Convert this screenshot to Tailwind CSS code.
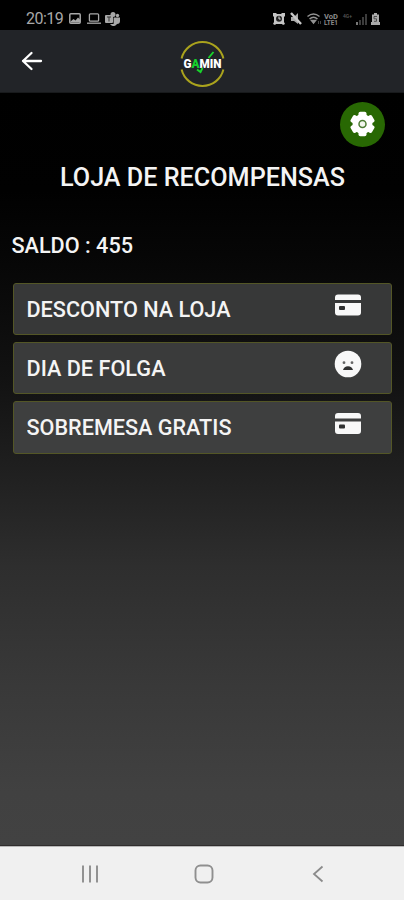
<!DOCTYPE html>
<html lang="pt">
<head>
<meta charset="utf-8">
<title>Loja de Recompensas</title>
<script src="https://cdn.jsdelivr.net/npm/@tailwindcss/browser@4"></script>
</head>
<body class="bg-black">
<div class="w-[404px] h-[900px] flex flex-col overflow-hidden font-['Roboto',sans-serif] font-medium text-[#f4f4f4]">
  <header class="h-[30px] bg-black flex items-center justify-between pl-[26px] pr-[23px] pt-[8px] text-[#a8a8a8]">
    <div class="flex items-center gap-[6px]">
      <span class="font-normal text-[16px] leading-[20px] w-[37px] tracking-[-0.5px] whitespace-nowrap">20:19</span>
      <svg class="w-[12px] h-[11px] -mt-px" viewBox="0 0 12 11" fill="none" stroke="currentColor" stroke-width="1.5"><rect x=".8" y=".8" width="10.4" height="9.4" rx="1"/><path d="M1.500 8.500 4.500 6l2 1.500L9 4.500l2 2V9.500H1.500z" fill="currentColor" stroke="none"/></svg>
      <svg class="w-[14px] h-[11px] -mt-px" viewBox="0 0 14 11" fill="none" stroke="currentColor" stroke-width="1.300"><rect x="2.400" y=".8" width="9.200" height="7.400" rx="1"/><path d="M0 10.200h14"/></svg>
      <svg class="w-[15px] h-[14px] -ml-[2px] -mt-px" viewBox="0 0 15 14" fill="currentColor"><rect y="3" width="8" height="8" rx="1"/><circle cx="8" cy="2.500" r="2.500"/><circle cx="12.500" cy="3.500" r="1.700"/><path d="M8.600 5.600H15V9a3 3 0 0 1-3 3 4 4 0 0 1-7 0h3.600z"/><path d="M2 5h4M4 5v4.500" stroke="#333" fill="none"/></svg>
    </div>
    <svg class="w-[108px] h-[14px] -mt-px" viewBox="0 0 108 14" fill="currentColor">
      <path d="M0 1h3l1 1h4l1-1h3v3l-1 1v5l1 2-2 1-1-1H3l-1 1-2-1 1-2V5L0 4z" fill="#c4c4c4"/><circle cx="6" cy="6.700" r="3" fill="#222"/><path d="M6 4.500V7h1.700" fill="none" stroke="#ddd"/>
      <path d="M18 5h3l4-4v11l-4-3h-3z" fill="#aaa"/><path d="m18 1 10 11" stroke="#c8c8c8" stroke-width="2.400"/>
      <g fill="none" stroke="#929292" stroke-width="1.500"><path d="M34.500 4.500q6-5 12 0M36.500 7q4-3.500 8 0"/><path d="m38.500 8.500 2 2.500 2-2.500z" fill="#929292"/></g><path d="M45.500 9v3m2-3v3" stroke="#444"/>
      <text x="51" y="7" font-size="7" font-weight="700" textLength="14" lengthAdjust="spacingAndGlyphs" fill="#8c8c8c">VoD</text><text x="51" y="13.300" font-size="7" font-weight="700" textLength="14" lengthAdjust="spacingAndGlyphs" fill="#8c8c8c">LTE1</text>
      <text x="70" y="5.500" font-size="5" textLength="9" lengthAdjust="spacingAndGlyphs" fill="#5a5a5a">4G+</text>
      <path d="M83 10h2v3h-2z" fill="#777"/><path d="M86 8h2v5h-2zM89 5h2v8h-2zM92 2h2v11h-2z" fill="#3c3c3c"/>
      <path d="M101 1h3v1.500h2V10h1v3h-9v-3h1V2.500h2z" fill="#aaa"/><path d="M104 4.500h-3v2.300h2.500v2.500H101" fill="none" stroke="#444" stroke-width=".9"/>
    </svg>
  </header>
  <nav class="h-[63px] bg-[#222428] border-b border-[#181a1c] grid grid-cols-[1fr_46px_1fr] items-center pl-[20px] pr-[20px]">
    <svg class="w-[22px] h-[20px] ml-px" viewBox="0 0 22 20" fill="none" stroke="#fff" stroke-width="2.300" stroke-linecap="round" stroke-linejoin="round"><path d="M10.500 2 2 10l8.500 8M2 10h18"/></svg>
    <svg class="w-[46px] h-[46px] mt-[5px]" viewBox="0 0 46 46" fill="none">
      <path d="M2.600 17.500a21.500 21.500 0 0 1 41.800 0M2.600 28.500a21.500 21.500 0 0 0 41.800 0" stroke="#aaa31d" stroke-width="2"/>
      <text x="4.500" y="27" font-family="Roboto" font-weight="900" font-size="12" textLength="38" lengthAdjust="spacingAndGlyphs" fill="#fff">G<tspan fill="#16cf2b">A</tspan>MIN</text>
      <path d="m18 28.500 3.500 2.500 2-4M29.500 17l5-6" stroke="#18d62c" stroke-width="1.900"/>
    </svg>
    <span></span>
  </nav>
  <main class="h-[753px] bg-[linear-gradient(to_bottom,#000_0%,#010101_13%,#070707_23%,#121212_38%,#1e1e1e_49%,#2e2e2e_63%,#393939_79%,#414141_93%,#424242_100%)] border-b border-[#302d2d] flex flex-col">
    <button class="self-end w-[45px] h-[45px] rounded-full bg-[#286803] mt-[9px] mr-[19px] flex items-center justify-center" aria-label="Configurações">
      <svg class="w-[25px] h-[26px] -ml-px -mt-px" viewBox="0 0 25 26"><g fill="#fff"><circle cx="12.500" cy="13" r="10"/><g id="tooth"><rect x="8.500" y=".7" width="8" height="24.600" rx="1.800"/></g><use href="#tooth" transform="rotate(60 12.500 13)"/><use href="#tooth" transform="rotate(120 12.500 13)"/></g><circle cx="12.500" cy="13" r="3.500" fill="#f3f7ee" stroke="#4c7b33" stroke-width="1.500"/></svg>
    </button>
    <h1 class="mt-[15px] pl-[60px] text-[25px] leading-[30px] whitespace-nowrap"><svg class="block w-[290px] h-[30px] overflow-visible" fill="currentColor"><text x="0" y="24.400" textLength="285" lengthAdjust="spacingAndGlyphs">LOJA DE RECOMPENSAS</text></svg></h1>
    <p class="mt-[38px] pl-[11px] text-[22px] leading-[30px]"><svg class="block w-[124px] h-[30px] overflow-visible" fill="currentColor"><text x="0.500" y="23.200" textLength="121.500" lengthAdjust="spacingAndGlyphs">SALDO : 455</text></svg></p>
    <ul class="mt-[23px] ml-[13px] mr-[12px] flex flex-col gap-[7px] text-[22px]">
      <li class="h-[52px] border border-[#535626] rounded-[3px] bg-[#373838] flex justify-between pl-[13px] pr-[29px]">
        <svg class="w-[210px] h-[50px]" fill="currentColor"><text x="-.5" y="32.700" textLength="204" lengthAdjust="spacingAndGlyphs">DESCONTO NA LOJA</text></svg>
        <svg class="w-[28px] h-[22px] mt-[10px]" viewBox="0 0 28 22" fill="#f8f8f8"><path d="M1 6V3.500A3 3 0 0 1 4 .5h20a3 3 0 0 1 3 3V6zM1 9h26v9.500a3 3 0 0 1-3 3H4a3 3 0 0 1-3-3z"/><rect x="5" y="12" width="6" height="4" rx="1" fill="#303131"/></svg>
      </li>
      <li class="h-[52px] border border-[#535626] rounded-[3px] bg-[#3a3b3b] flex justify-between pl-[13px] pr-[29px]">
        <svg class="w-[210px] h-[50px]" fill="currentColor"><text x="-.5" y="32.700" textLength="139" lengthAdjust="spacingAndGlyphs">DIA DE FOLGA</text></svg>
        <svg class="w-[28px] h-[28px] mt-[7px]" viewBox="0 0 28 28"><circle cx="14" cy="14" r="13.300" fill="#f8f8f8"/><circle cx="10" cy="12.700" r="1.400" fill="#666"/><circle cx="18" cy="12.700" r="1.400" fill="#666"/><path d="M9 20q1-3.800 5-3.800t5 3.800z" fill="#303131"/></svg>
      </li>
      <li class="h-[53px] border border-[#535626] rounded-[3px] bg-[#3e3f3f] flex justify-between pl-[13px] pr-[29px]">
        <svg class="w-[210px] h-[50px]" fill="currentColor"><text x="-.5" y="32.700" textLength="205" lengthAdjust="spacingAndGlyphs">SOBREMESA GRATIS</text></svg>
        <svg class="w-[28px] h-[22px] mt-[11px]" viewBox="0 0 28 22" fill="#f8f8f8"><path d="M1 5.500V3A3 3 0 0 1 4 0h20a3 3 0 0 1 3 3v2.500zM1 8.500h26V18a3 3 0 0 1-3 3H4a3 3 0 0 1-3-3z"/><rect x="5" y="11.500" width="6" height="4" rx="1" fill="#303131"/></svg>
      </li>
    </ul>
  </main>
  <footer class="h-[54px] bg-[#f0f0f0] border-t border-[#b8b8b8] grid grid-cols-3 items-center justify-items-center px-[34px]">
    <svg class="w-[18px] h-[18px]" viewBox="0 0 18 18" stroke="#929292" stroke-width="2"><path d="M2 .5v17M9 .5v17M16 .5v17"/></svg>
    <svg class="w-[20px] h-[20px] ml-[4px]" viewBox="0 0 20 20" fill="none" stroke="#8f8f8f" stroke-width="1.900"><rect x="1.500" y="1.500" width="17" height="17" rx="5"/></svg>
    <svg class="w-[12px] h-[18px] ml-[7px]" viewBox="0 0 12 18" fill="none" stroke="#8b8b8b" stroke-width="1.800"><path d="M10.500 1.500 2 9l8.500 7.500"/></svg>
  </footer>
</div>
</body>
</html>
